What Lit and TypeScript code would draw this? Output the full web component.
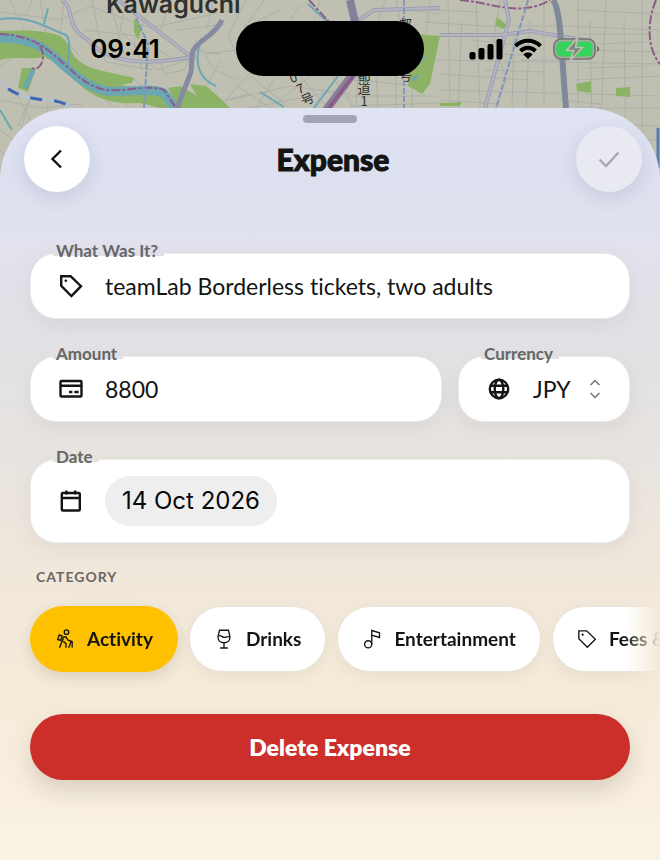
import { LitElement, html, css, svg } from "lit";
import { customElement, state } from "lit/decorators.js";
import { classMap } from "lit/directives/class-map.js";

const icons: Record<string, unknown> = {
  tag: svg`<path d="M2.200 2.200h9.400l10.400 10-9.600 9.800-10.200-10.200z"/><circle cx="6.800" cy="6.800" r="1.300" fill="currentColor" stroke="none"/>`,
  card: svg`<rect x="1.500" y="4" width="21" height="15.500" rx="1"/><path d="M1.500 8.800h21M10 15h3.400M15.400 15h4.200"/>`,
  globe: svg`<circle cx="12" cy="12" r="9.200"/><ellipse cx="12" cy="12" rx="4.300" ry="9.200"/><path d="M3.200 8.800h17.600M3.200 15.200h17.600"/>`,
  calendar: svg`<rect x="2.800" y="4" width="18" height="17.500" rx="1"/><path d="M3 9h18M7.400 1.500v4M16.200 1.500v4"/>`,
  hike: svg`<circle cx="13.800" cy="3.800" r="2.700"/><path d="M5 7.200l3.600 1.200-1.800 5.400-3.600-1.200zM5.400 22.600l5-12.800 2.600-.4 2.600 4 5 1.600v7.600M9.800 14.600l3.400 3v5M19.400 15l-3 7.600"/>`,
  glass: svg`<path d="M6.600 1.500h10.800l1.800 8c0 4.200-3 7-7.200 7s-7.200-2.800-7.200-7zM5 8.400c3.800-1.800 5.400 2.600 8.400 1.600 2.200-.8 3.600-1.200 5.600-.6M12 16.500v6M7.400 22.800h9.200"/>`,
  note: svg`<circle cx="7.400" cy="18.400" r="4.300"/><path d="M11.700 18.400V1.800l9.300 2.800v5.600l-9.300-2.800"/>`,
};

const icon = (name: string) =>
  html`<svg class="icon" viewBox="0 0 24 24" aria-hidden="true">${icons[name]}</svg>`;

@customElement("city-map")
class CityMap extends LitElement {
  static styles = css`
    :host { display: block; overflow: hidden; background: #bfc0b2; }
    svg { display: block; width: 100%; height: 100%; }
    .street { fill: none; stroke: #adb0aa; stroke-width: 1; }
    .road { fill: none; stroke: #9c9eb0; stroke-width: 4; }
    .road-in { fill: none; stroke: #b4b5c0; stroke-width: 2; }
    .park { fill: #8cb266; }
    .water { fill: none; stroke: #6aa6b4; }
    .place { font: 600 25px Inter, "Liberation Sans", sans-serif; fill: #30322f; }
    .route { font: 13px "Noto Sans CJK JP", sans-serif; fill: #303130; }
    .down { writing-mode: vertical-rl; text-orientation: upright; }
    .border { fill: none; stroke: #8c5c86; stroke-width: 2; stroke-dasharray: 9 2 3 2; }
  `;
  render() {
    return html`<svg viewBox="0 0 660 200" preserveAspectRatio="xMidYMin slice" aria-hidden="true">
      <path class="street" d="M0 12l60 8 30-14 60 22 90-20M10 0l14 30-24 20M40 0l6 34M64 0l-4 36 20 20M92 0l8 40M126 0l-6 30 36 40 40-12M84 30l54 6 40 26M100 40l6 22 46 8M110 0l16 62M0 100l40 8 40-4 18 22M30 98l-12 28M48 102l-2 30M60 100l8 24M80 108l-40 22M14 90l20 36M88 82l30 30M110 90l20 18M126 74l20 14M0 130l30 22M0 150l20 24M160 60l4 14 20-4 10-20 26 4M196 40l18 30 24 10M206 54l30-4M180 90l30 14 40-10M220 60l-20 40M226 100l30-34M246 0l-18 36 14 30M264 0l-20 28M280 10l-34 16M234 84l36 24M250 76l40 32M276 76l-20 32M310 76l-40 32M300 76l28 32M332 76l22 32M230 100l60-14 60 8M240 110l100-20M352 80l70 6M346 96l90 0M358 76l-2 32M376 76l2 32M396 76v32M412 76v32M350 106l90-3M386 0l-8 20M430 0l-4 34M448 0l2 108M462 20l-4 88M476 0l4 108M424 22l60 4 80 0 96 4M436 60l224 4M440 74l90 6M440 90l220 6M500 0l-6 40 12 40-10 28M514 30l-2 78M530 20l-4 88M544 0v108M578 0v108M590 20l2 100M606 0l-6 140M624 20l2 130M642 0v180M574 10l86 4M578 34l70 0M580 50l80 2M576 80l84-4M580 108l80 0M600 124l60 2M620 140l40 0M0 168l12-16"/>
      <path class="street" d="M470 40l60 6M480 52l50 4M484 70l60 2M440 100l60 4M430 10l50 2M520 60l50 0M560 100l40 4M596 44l50-2M586 68l60-2M300 4l-10 16M320 0l-6 20M350 0l6 20M396 0l4 20M410 10l30 4M0 66l14-10M20 132l10-34M26 16l6-16M150 10l-16 30 8 30M170 0l-10 34M178 30l46-6M214 0l-8 30"/>
      <path class="park" d="M0 31C26 30 44 30 60 36c8 4 10 14 14 20 8 10 22 14 34 16l26 6-2 5-12 2 30 5 14 6 12 12h-16l-20-5c-30 2-46-6-60-18C66 74 58 62 44 57 30 60 12 56 0 60z"/>
      <path class="park" d="M22 68l14 0-8 24-10-4zM134 18l8 10-4 12-4-8zM168 88l12-2 14 8 20 14h-36zM190 84l16 2 14 12 10 10h-26zM416 34l24 2-10 48-8 10-14-8zM497 17l10 8-4 4-8-4zM576 84l15-3v12l-14-2zM616 88l14-1v10l-14-1zM440 103l22-1-2 4-20 0z"/>
      <path class="water" stroke-width="9" d="M0 38C34 38 48 50 62 64c14 12 24 22 44 27 20 2 44-4 58 2l12 16"/>
      <path class="water" stroke-width="5" d="M33 70l-8 18"/>
      <path class="water" stroke-width="2" d="M0 19c30-4 44 8 66 16 6 6 2 20 2 30M44 24l4-16M202 38c-8 20-6 40 14 48M0 110l12 20M338 76l-24 32M308 4l22 20M260 92l24 15"/>
      <path class="water" stroke-width="3" d="M420 62c4-6 4-6 2-8M412 80l6-4"/>
      <path class="border" d="M0 34C34 36 46 48 62 62c14 12 24 24 44 28 20 2 44-6 58 0l12 18"/>
      <path class="border" d="M40 46c8 14-2 26-8 22M309 0l20 22M460 0c30 2 60 18 90 0M656 0c-10 24-8 50 4 64"/>
      <path class="road" d="M62 0c14 10 2 26 26 40 20 24 60 26 108 16M190 56L118 0M350 26l24-16 66-2M440 35l60 0 30-4 60 10M505 0l4 20-24 88"/>
      <path class="road-in" d="M62 0c14 10 2 26 26 40 20 24 60 26 108 16M190 56L118 0M350 26l24-16 66-2M440 35l60 0 30-4 60 10M505 0l4 20-24 88"/>
      <path d="M222 20c-8 18-30 22-30 36l-1 16-14 36" fill="none" stroke="#858aa0" stroke-width="5"/>
      <path d="M350 0l6 26v44l-30 40" fill="none" stroke="#84809c" stroke-width="8"/>
      <path d="M356 72l-28 37" fill="none" stroke="#8e5a83" stroke-width="3"/>
      <path d="M553 0c8 10 8 50 13 108" fill="none" stroke="#808999" stroke-width="6"/>
      <path d="M136 18l12 26-4 64M404 0v108M528 0l-32 108" fill="none" stroke="#7f96bf" stroke-width="2" stroke-dasharray="6 2"/>
      <path d="M0 80c8 14 28 18 44 20 14 0 24 4 30 10" fill="none" stroke="#b9bfcd" stroke-width="3"/>
      <path d="M0 80c8 14 28 18 44 20 14 0 24 4 30 10" fill="none" stroke="#3f68b5" stroke-width="3" stroke-dasharray="12 12" stroke-dashoffset="12"/>
      <path d="M658 128v40" fill="none" stroke="#5a79b0" stroke-width="3"/>
      <text class="place" x="106" y="13">Kawaguchi</text>
      <g class="route">
        <text x="290" y="82" transform="rotate(-20 294 78)">0</text>
        <text x="297" y="93" transform="rotate(-20 301 89)">7</text>
        <text x="301" y="104" transform="rotate(-24 307 99)">号</text>
        <text class="down" x="364" y="69">都道1</text>
        <text x="399" y="29">都</text><text x="399" y="80">号</text>
      </g>
    </svg>`;
  }
}

@customElement("app-root")
class AppRoot extends LitElement {
  @state() selected = "Activity";

  static styles = css`
    :host { display: block; color: #121512; font-family: Lato, "Open Sans", sans-serif; font-variant-ligatures: none; }
    * { box-sizing: border-box; }
    button, input, select { font: inherit; font-variant-ligatures: none; color: inherit; margin: 0; padding: 0; border: 0; background: none; outline-offset: 2px; }
    .screen { position: relative; display: flex; flex-direction: column; min-height: 100vh; overflow: hidden; }
    .map { position: absolute; inset: 0 0 auto; height: 200px; }
    .status { position: relative; height: 108px; padding: 21px 60px 0; display: grid; grid-template-columns: 1fr 188px 1fr; color: #000; }
    .time { justify-self: center; margin-right: 46px; font: 600 26px/55px Inter, "Liberation Sans", sans-serif; }
    .island { height: 55px; border-radius: 28px; background: #000; }
    .signals { display: flex; align-items: center; justify-content: flex-end; height: 55px; gap: 10px; }
    .signals svg { display: block; flex: none; }
    .sheet { position: relative; flex: 1; padding: 7px 30px 40px; border-radius: 72px 72px 0 0;
      background: linear-gradient(#dfe3f3, #dce0ef 8%, #e1e2ed 18%, #e2e1e5 31%, #e6e3e0 43%, #f0e7dc 60%, #f5ebd9 77%, #faf2e5); }
    .grabber { width: 54px; height: 8px; margin: 0 auto; border-radius: 4px; background: #a2a5b8; }
    .bar { display: flex; align-items: center; justify-content: space-between; margin: 3px -12px 0 -6px; }
    .title { margin: 0; font-size: 30px; line-height: 36px; font-weight: 900; -webkit-text-stroke: 1px currentColor; }
    .round { display: grid; place-items: center; width: 66px; height: 66px; border-radius: 50%; background: #fff; box-shadow: 0 6px 18px #50507824; }
    .round:disabled { background: #e9eaf1; color: #a9a9ad; }
    .form { display: grid; gap: 37px; margin-top: 61px; --notch: #e0e0e8; }
    .row { display: grid; grid-template-columns: minmax(0, 1fr) 172px; gap: 16px; --notch: #e0dfe1; }
    .field { position: relative; display: flex; align-items: center; height: 66px; padding: 0 28px; border: 1px solid #ececec; border-radius: 26px; background: #fff; box-shadow: 0 6px 20px #50505014; }
    .field.tall { height: 84px; --notch: #e6e3e0; }
    .label { position: absolute; left: 22px; top: -13px; padding: 0 6px 0 3px; font-size: 17px; line-height: 20px; font-weight: 700; color: #666667;
      background: linear-gradient(transparent 12px, var(--notch) 12px 15px, transparent 15px); }
    .icon { display: block; flex: none; width: 24px; height: 24px; fill: none; stroke: currentColor; stroke-width: 2.4; }
    .text { flex: 1; min-width: 0; margin-left: 22px; font-size: 23px; line-height: 30px; }
    .select { flex: 1; appearance: none; margin-left: 22px; font-size: 23px; line-height: 30px; }
    .date { height: 50px; padding: 0 17px; margin-left: 22px; border-radius: 25px; background: #eeeeef; color: #080808; font: 24px/50px Inter, "Liberation Sans", sans-serif; }
    .section { margin: 24px 6px 0; font-size: 14px; line-height: 20px; font-weight: 700; letter-spacing: 1px; color: #6b665f; }
    .chips { display: flex; gap: 11px; margin: 0 -30px; padding: 19px 30px 42px; overflow: hidden; mask-image: linear-gradient(90deg, #000 calc(100% - 36px), transparent); }
    .chip { display: flex; flex: none; align-items: center; gap: 12px; height: 66px; padding: 0 24px; border: 1px solid #e9e3d7; border-radius: 33px; background: #fff; font-size: 19px; font-weight: 700; line-height: 24px; white-space: nowrap; box-shadow: 0 5px 14px #6a5a3a14; }
    .chip .icon { width: 20px; height: 20px; stroke-width: 1.6; }
    .chip.on { background: #ffc000; border-color: #ffc000; box-shadow: 0 5px 14px #6a5a3a30; }
    .delete { display: block; width: 100%; height: 66px; border-radius: 33px; background: #cc2e2a; color: #fff; font-size: 23px; font-weight: 800; box-shadow: 0 10px 24px #5a503a33; }
  `;

  render() {
    const chips = [["Activity", "hike"], ["Drinks", "glass"], ["Entertainment", "note"], ["Fees & Tickets", "tag"]];
    return html`
      <main class="screen">
        <city-map class="map"></city-map>
        <div class="status">
          <span class="time">09:41</span>
          <div class="island"></div>
          <div class="signals">
            <svg width="34" height="22" viewBox="0 0 34 22"><rect x="0.500" y="14" width="6" height="7.500" rx="1.800"/><rect x="9.500" y="10" width="6" height="11.500" rx="1.800"/><rect x="18.500" y="6" width="6" height="15.500" rx="1.800"/><rect x="27.500" y="1" width="6" height="20.500" rx="1.800"/></svg>
            <svg width="30" height="22" viewBox="0 0 30 22" fill="none" stroke="#000" stroke-width="4"><path d="M2.500 8c7-7 18-7 25 0M7.500 13c4.500-4.300 10.500-4.300 15 0"/><path d="M15 21l-4.600-4.600c2.600-2.400 6.600-2.400 9.200 0z" fill="#000" stroke="none"/></svg>
            <svg width="47" height="24" viewBox="0 0 47 24"><rect x="1" y="2" width="41" height="20" rx="7" fill="#a6aaa0" stroke="#727570" stroke-width="1.600"/><rect x="3.500" y="4.500" width="36" height="15" rx="4.500" fill="#35d25c"/><path d="M44 9c3 1 3 5 0 6z" fill="#727570"/><path d="M24.500 1L13.500 13.500h7L17.500 23l12-12.500h-7z" fill="#80857e" stroke="#bfc0b2" stroke-width="1.600"/></svg>
          </div>
        </div>
        <section class="sheet">
          <div class="grabber"></div>
          <header class="bar">
            <button class="round" aria-label="Back"><svg width="24" height="24" viewBox="0 0 24 24" fill="none" stroke="currentColor" stroke-width="2.400"><path d="M16 3.500L7.500 12l8.500 8.500"/></svg></button>
            <h1 class="title">Expense</h1>
            <button class="round" aria-label="Save" disabled><svg width="24" height="24" viewBox="0 0 24 24" fill="none" stroke="currentColor" stroke-width="2.400"><path d="M2.500 12.500l6.500 6.500L21.500 5.500"/></svg></button>
          </header>
          <div class="form">
            <div class="field"><label class="label" for="what">What Was It?</label>${icon("tag")}<input class="text" id="what" value="teamLab Borderless tickets, two adults"></div>
            <div class="row">
              <div class="field"><label class="label" for="amount">Amount</label>${icon("card")}<input class="text" id="amount" inputmode="numeric" value="8800"></div>
              <div class="field"><label class="label" for="currency">Currency</label>${icon("globe")}<select class="select" id="currency"><option>JPY</option><option>EUR</option></select>
                <svg width="12" height="20" viewBox="0 0 12 20" fill="none" stroke="#737373" stroke-width="1.500" aria-hidden="true"><path d="M1.500 6L6 1.500 10.500 6M1.500 14L6 18.500l4.500-4.500"/></svg></div>
            </div>
            <div class="field tall"><label class="label" for="date">Date</label>${icon("calendar")}<button class="date" id="date">14 Oct 2026</button></div>
          </div>
          <h2 class="section">CATEGORY</h2>
          <div class="chips">
            ${chips.map(([name, glyph]) => html`<button class=${classMap({ chip: true, on: this.selected === name })} aria-pressed=${this.selected === name} @click=${() => (this.selected = name)}>${icon(glyph)}${name}</button>`)}
          </div>
          <button class="delete">Delete Expense</button>
        </section>
      </main>`;
  }
}
